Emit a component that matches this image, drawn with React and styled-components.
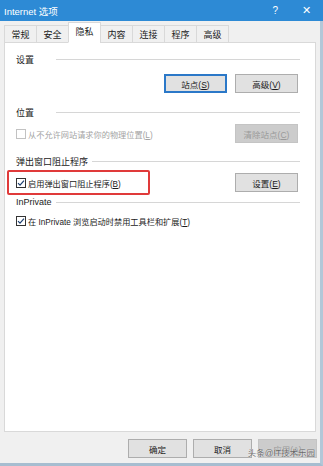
import React from "react";
import styled, { createGlobalStyle } from "styled-components";

const GlobalStyle = createGlobalStyle`
    html, body {
        margin: 0;
        padding: 0;
        background: #ffffff;
    }
    body {
        font-family: "Liberation Sans", "Noto Sans CJK SC", sans-serif;
    }
`;

const tabs = ["常规", "安全", "隐私", "内容", "连接", "程序", "高级"];

const CheckIcon = ({checked, disabled}) => (
    <CheckBox disabled={disabled}>
        {checked && (
            <svg width="8" height="8" viewBox="0 0 8 8">
                <path d="M1 4.2l2 2L7 1.6" fill="none" stroke="#1c3f70" strokeWidth="1.2"/>
            </svg>
        )}
    </CheckBox>
);

const Section = ({label, top}) => (
    <SectionHeader top={top}>
        <SectionLabel>{label}</SectionLabel>
        <SectionLine/>
    </SectionHeader>
);

const App = () => {
    return (
        <>
            <GlobalStyle/>
            <Window>
                <TitleBar>
                    <Title>Internet 选项</Title>
                    <TitleControls>
                        <span>?</span>
                        <CloseGlyph>✕</CloseGlyph>
                    </TitleControls>
                </TitleBar>
                <Frame>
                    <TabStrip>
                        {tabs.map((t) => (
                            <Tab key={t} active={t === "隐私"}>{t}</Tab>
                        ))}
                    </TabStrip>
                    <Panel>
                        <Section label="设置" top={10}/>
                        <ButtonRow>
                            <Button primary><span>站点(<u>S</u>)</span></Button>
                            <Button><span>高级(<u>V</u>)</span></Button>
                        </ButtonRow>

                        <Section label="位置" top={13}/>
                        <OptionRow gap={6}>
                            <CheckRow disabled>
                                <CheckIcon disabled/>
                                <CheckLabel>从不允许网站请求你的物理位置(<u>L</u>)</CheckLabel>
                            </CheckRow>
                            <Button disabled><span>清除站点(<u>C</u>)</span></Button>
                        </OptionRow>

                        <Section label="弹出窗口阻止程序" top={12}/>
                        <OptionRow gap={3}>
                            <Highlight>
                                <CheckRow>
                                    <CheckIcon checked/>
                                    <CheckLabel>启用弹出窗口阻止程序(<u>B</u>)</CheckLabel>
                                </CheckRow>
                            </Highlight>
                            <Button><span>设置(<u>E</u>)</span></Button>
                        </OptionRow>

                        <Section label="InPrivate" top={1}/>
                        <OptionRow gap={7}>
                            <CheckRow>
                                <CheckIcon checked/>
                                <CheckLabel>在 InPrivate 浏览启动时禁用工具栏和扩展(<u>T</u>)</CheckLabel>
                            </CheckRow>
                        </OptionRow>
                    </Panel>
                    <Footer>
                        <FooterButton>确定</FooterButton>
                        <FooterButton>取消</FooterButton>
                        <FooterButton disabled><span>应用(<u>A</u>)</span></FooterButton>
                        <Watermark>头条@IT技术乐园</Watermark>
                    </Footer>
                </Frame>
            </Window>
        </>
    );
};

export default App;

const Window = styled.div`
    width: 323px;
    height: 466px;
    display: flex;
    flex-direction: column;
    background: #f0f0f0;
    font-size: 9px;
    color: #1b1b1b;
    overflow: hidden;
`;

const TitleBar = styled.div`
    height: 21px;
    flex-shrink: 0;
    display: flex;
    align-items: center;
    justify-content: space-between;
    background: #2d8ad5;
    color: #ffffff;
    padding: 0 12px 0 4px;
`;

const Title = styled.div`
    font-size: 9.5px;
`;

const TitleControls = styled.div`
    display: flex;
    align-items: center;
    gap: 24px;
    font-size: 10px;
`;

const CloseGlyph = styled.span`
    font-size: 11px;
`;

const Frame = styled.div`
    flex: 1;
    display: flex;
    flex-direction: column;
    padding: 1px 4px 0 4px;
    border-right: 3px solid #b3c7d8;
    border-bottom: 3px solid #a6bdd0;
`;

const TabStrip = styled.div`
    display: flex;
    align-items: flex-end;
    height: 21px;
    margin-bottom: -1px;
    position: relative;
    z-index: 1;
`;

const Tab = styled.div`
    width: 33px;
    height: ${(p) => (p.active ? "21px" : "18px")};
    box-sizing: border-box;
    display: flex;
    align-items: center;
    justify-content: center;
    padding-bottom: ${(p) => (p.active ? "2px" : "0")};
    border: 1px solid #d9d9d9;
    border-bottom: ${(p) => (p.active ? "1px solid #ffffff" : "1px solid #d9d9d9")};
    margin-left: -1px;
    background: ${(p) => (p.active ? "#ffffff" : "#f0f0f0")};
    font-size: 9px;

    &:first-child {
        margin-left: 0;
    }
`;

const Panel = styled.div`
    height: 390px;
    box-sizing: border-box;
    background: #ffffff;
    border: 1px solid #d9d9d9;
    padding: 0 15px 0 11px;
    display: flex;
    flex-direction: column;
`;

const SectionHeader = styled.div`
    display: flex;
    align-items: center;
    height: 12px;
    margin-top: ${(p) => p.top}px;
`;

const SectionLabel = styled.span`
    min-width: 36px;
    margin-right: 4px;
    white-space: nowrap;
`;

const SectionLine = styled.div`
    flex: 1;
    height: 1px;
    background: #d6d6d6;
`;

const ButtonRow = styled.div`
    display: flex;
    justify-content: flex-end;
    gap: 8px;
    padding-right: 2px;
    margin-top: 9px;
`;

const OptionRow = styled.div`
    display: flex;
    align-items: center;
    justify-content: space-between;
    padding-right: 2px;
    margin-top: ${(p) => p.gap}px;
`;

const Button = styled.div`
    width: 63px;
    height: 19px;
    box-sizing: border-box;
    display: flex;
    align-items: center;
    justify-content: center;
    background: ${(p) => (p.disabled ? "#cccccc" : "#e1e1e1")};
    color: ${(p) => (p.disabled ? "#9a9a9a" : "#1b1b1b")};
    border: ${(p) => (p.primary ? "2px solid #2b78c8" : p.disabled ? "1px solid #c4c4c4" : "1px solid #adadad")};
    font-size: 8.5px;
    white-space: nowrap;

    u {
        text-underline-offset: 1px;
    }
`;

const CheckRow = styled.div`
    display: flex;
    align-items: center;
    gap: 2px;
    height: 12px;
    color: ${(p) => (p.disabled ? "#a3a3a3" : "#1b1b1b")};
`;

const CheckLabel = styled.span`
    font-size: 8.2px;
    white-space: nowrap;

    u {
        text-underline-offset: 1px;
    }
`;

const CheckBox = styled.span`
    width: 10px;
    height: 10px;
    box-sizing: border-box;
    display: inline-flex;
    align-items: center;
    justify-content: center;
    border: 1px solid ${(p) => (p.disabled ? "#c2c2c2" : "#333333")};
    background: #ffffff;
    flex-shrink: 0;
`;

const Highlight = styled.div`
    margin-left: -9px;
    width: 143px;
    height: 25px;
    box-sizing: border-box;
    border: 2px solid #e03a3a;
    border-radius: 2px;
    padding-left: 7px;
    display: flex;
    align-items: center;
`;

const Footer = styled.div`
    display: flex;
    justify-content: flex-end;
    gap: 6px;
    margin-top: 7px;
    margin-right: -1px;
    position: relative;
`;

const FooterButton = styled(Button)`
    width: 59px;
`;

const Watermark = styled.span`
    position: absolute;
    right: 2px;
    top: 7px;
    font-size: 8.5px;
    color: rgba(40, 40, 40, 0.7);
    white-space: nowrap;
    text-shadow: 0 0 1px #fff;
`;
